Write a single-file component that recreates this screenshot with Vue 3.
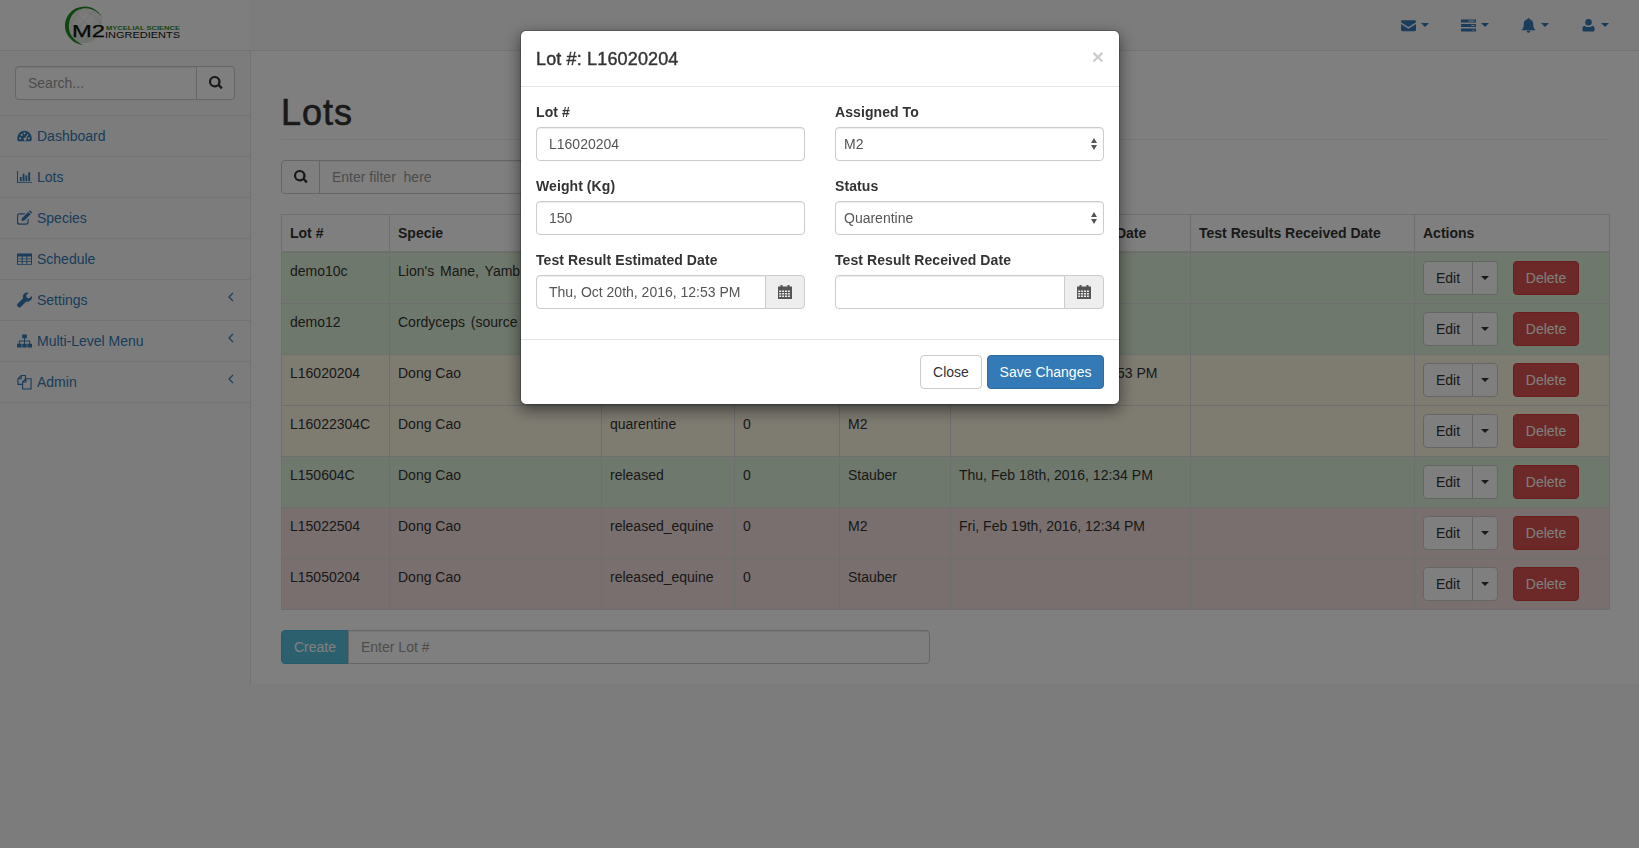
<template>
  <div class="page">
    <header class="navbar">
      <div class="brand">
        <svg class="logo" width="130" height="50" viewBox="0 0 130 50">
          <defs>
            <radialGradient id="dome" cx="0.55" cy="0.3" r="0.7">
              <stop offset="0" stop-color="#fafafa" />
              <stop offset="1" stop-color="#dde3da" />
            </radialGradient>
          </defs>
          <circle cx="24" cy="25" r="18" fill="url(#dome)" />
          <path d="M14 12 38 34M24 8 42 24M8 22 28 42M34 10 12 36M42 20 24 42M22 8 6 28" fill="none" stroke="#c8cfc6" stroke-width="0.5" />
          <path d="M43 19C38 8 27 4 17 8 7 12 2 24 7 34c3 6 9 10 16 11-6-3-11-7-13-12C7 24 10 14 18 10c9-4 19-1 25 9z" fill="#1f8a1f" />
          <text x="12" y="37" class="logo-m2" textLength="33" lengthAdjust="spacingAndGlyphs">M2</text>
          <text x="46" y="29.6" class="logo-sci" textLength="74" lengthAdjust="spacingAndGlyphs">MYCELIAL SCIENCE</text>
          <text x="45" y="37.8" class="logo-ing" textLength="75" lengthAdjust="spacingAndGlyphs">INGREDIENTS</text>
        </svg>
      </div>
      <nav class="top-links">
        <a v-for="n in topIcons" :key="n" class="top-item">
          <svg class="ico" width="15" height="15" viewBox="0 0 16 16"><path :d="icons[n]" fill-rule="evenodd" /></svg>
          <span class="caret"></span>
        </a>
      </nav>
    </header>

    <div class="main">
      <aside class="sidebar">
        <div class="side-search">
          <div class="input-group">
            <input class="form-control" placeholder="Search..." />
            <button class="btn addon-btn">
              <svg width="14" height="14" viewBox="0 0 16 16"><path :d="icons.search" fill-rule="evenodd" /></svg>
            </button>
          </div>
        </div>
        <a v-for="m in menu" :key="m.label" class="side-link">
          <svg v-if="m.line" class="side-ico line" width="16" height="16" viewBox="0 0 16 16"><path :d="icons[m.icon]" /></svg>
          <svg v-else class="side-ico" width="16" height="16" viewBox="0 0 16 16"><path :d="icons[m.icon]" fill-rule="evenodd" /></svg>
          <span class="side-label">{{ m.label }}</span>
          <svg v-if="m.sub" class="arrow" width="8" height="10" viewBox="0 0 8 10"><path d="M6 1 2 5l4 4" /></svg>
        </a>
      </aside>

      <main class="wrapper">
        <h1 class="page-header">Lots</h1>
        <div class="input-group wide">
          <button class="btn addon-btn">
            <svg width="14" height="14" viewBox="0 0 16 16"><path :d="icons.search" fill-rule="evenodd" /></svg>
          </button>
          <input class="form-control" placeholder="Enter filter  here" />
        </div>

        <table class="lots">
          <colgroup>
            <col v-for="(w, i) in colWidths" :key="i" :style="{ width: w + 'px' }" />
          </colgroup>
          <thead>
            <tr><th v-for="h in headers" :key="h">{{ h }}</th></tr>
          </thead>
          <tbody>
            <tr v-for="r in rows" :key="r.lot" :class="r.tone">
              <td>{{ r.lot }}</td>
              <td :class="{ long: r.long }">{{ r.specie }}</td>
              <td>{{ r.status }}</td>
              <td>{{ r.weight }}</td>
              <td>{{ r.to }}</td>
              <td>{{ r.date }}</td>
              <td></td>
              <td>
                <div class="actions">
                  <button class="btn edit">Edit</button>
                  <button class="btn edit-caret"><span class="caret dark"></span></button>
                  <button class="btn delete">Delete</button>
                </div>
              </td>
            </tr>
          </tbody>
        </table>

        <div class="input-group wide">
          <button class="btn create">Create</button>
          <input class="form-control" placeholder="Enter Lot #" />
        </div>
      </main>
    </div>

    <div class="backdrop"></div>

    <div class="modal-layer">
      <div class="modal">
        <div class="modal-head">
          <h4>Lot #: L16020204</h4>
          <span class="close">×</span>
        </div>
        <div class="modal-body">
          <div class="field">
            <label>Lot #</label>
            <input class="form-control" value="L16020204" />
          </div>
          <div class="field">
            <label>Assigned To</label>
            <div class="select-box">
              <select class="form-control"><option>M2</option></select>
            </div>
          </div>
          <div class="field">
            <label>Weight (Kg)</label>
            <input class="form-control" value="150" />
          </div>
          <div class="field">
            <label>Status</label>
            <div class="select-box">
              <select class="form-control"><option>Quarentine</option></select>
            </div>
          </div>
          <div class="field">
            <label>Test Result Estimated Date</label>
            <div class="input-group">
              <input class="form-control" value="Thu, Oct 20th, 2016, 12:53 PM" />
              <span class="cal"><svg width="16" height="16" viewBox="0 0 16 16"><path :d="calendar" fill-rule="evenodd" /></svg></span>
            </div>
          </div>
          <div class="field">
            <label>Test Result Received Date</label>
            <div class="input-group">
              <input class="form-control" />
              <span class="cal"><svg width="16" height="16" viewBox="0 0 16 16"><path :d="calendar" fill-rule="evenodd" /></svg></span>
            </div>
          </div>
        </div>
        <div class="modal-foot">
          <button class="btn close-btn">Close</button>
          <button class="btn primary">Save Changes</button>
        </div>
      </div>
    </div>
  </div>
</template>

<script setup>
const icons = {
  envelope: 'M1.5 2.5h13A1.5 1.5 0 0 1 16 4v.6L8 9.6 0 4.6V4a1.5 1.5 0 0 1 1.5-1.5z M0 6.4l8 5 8-5v6.1a1.5 1.5 0 0 1-1.5 1.5h-13A1.5 1.5 0 0 1 0 12.5z',
  tasks: 'M0 1.5h16v3.2H0z M8 2.6v1h6.5v-1z M0 6.4h16v3.2H0z M11 7.5v1h3.5v-1z M0 11.3h16v3.2H0z M12 12.4v1h2.5v-1z',
  bell: 'M8 0a1.2 1.2 0 0 0-1.1 1.3C4.6 1.8 3 3.6 3 6c0 4-1.2 5.5-2.5 7h15C14.2 11.5 13 10 13 6c0-2.4-1.6-4.2-3.9-4.7A1.2 1.2 0 0 0 8 0z M6 13.7h4a2 2 0 0 1-4 0z',
  user: 'M8 1a3.5 3.5 0 1 0 0 7 3.5 3.5 0 0 0 0-7z M3.5 8.2C4.5 9 6 9.5 8 9.5s3.5-.5 4.5-1.3c1.5.3 2 2 2 4.3 0 1.2-.8 2-2 2h-9c-1.2 0-2-.8-2-2 0-2.3.5-4 2-4.3z',
  search: 'M6.5 0a6.5 6.5 0 1 0 3.9 11.7l3.4 3.4 1.9-1.9-3.4-3.4A6.5 6.5 0 0 0 6.5 0z M6.5 2.4a4.1 4.1 0 1 1 0 8.2 4.1 4.1 0 0 1 0-8.2z',
  gauge: 'M8 2.5A7.8 7.8 0 0 0 .2 10.3c0 1.3.3 2.4.9 3.4h13.8c.6-1 .9-2.1.9-3.4A7.8 7.8 0 0 0 8 2.5z M2.2 10.5a1.2 1.2 0 1 0 2.4 0 1.2 1.2 0 0 0-2.4 0z M3.8 6.7a1.2 1.2 0 1 0 2.4 0 1.2 1.2 0 0 0-2.4 0z M6.8 5.1a1.2 1.2 0 1 0 2.4 0 1.2 1.2 0 0 0-2.4 0z M11.4 5.5 8.9 9.7a1.6 1.6 0 1 0 1 .6l2.5-4.2z M11.4 10.5a1.2 1.2 0 1 0 2.4 0 1.2 1.2 0 0 0-2.4 0z',
  bars: 'M0 1.5h1V13.5h15v1H0z M3 8h2v4.5H3z M6 4.5h2v8H6z M9 6.5h2v6H9z M12 3h2v9.5h-2z',
  edit: 'M2.5 3H9L7.8 4.2H2.7c-.8 0-1.5.7-1.5 1.5v6.6c0 .8.7 1.5 1.5 1.5h7c.8 0 1.5-.7 1.5-1.5V9.6l1.2-1.2v4.1c0 1.5-1.2 2.7-2.7 2.7H2.5A2.5 2.5 0 0 1 0 12.5v-7A2.5 2.5 0 0 1 2.5 3z M5 8.5l7-7L14.5 4l-7 7H5z M12.7.8l.6-.5c.3-.3.7-.3 1 0l1.4 1.4c.3.3.3.7 0 1l-.5.6z',
  table: 'M0 2h16v12H0z M1 5.2v2.3h4V5.2z M6 5.2v2.3h4V5.2z M11 5.2v2.3h4V5.2z M1 8.3v2.2h4V8.3z M6 8.3v2.2h4V8.3z M11 8.3v2.2h4V8.3z M1 11.2v2h4v-2z M6 11.2v2h4v-2z M11 11.2v2h4v-2z',
  wrench: 'M15.6 3.6l-2.8 2.8-2.3-.9-.9-2.3L12.4.4a4.5 4.5 0 0 0-5.9 5.7L.6 12a1.9 1.9 0 0 0 0 2.7l.7.7a1.9 1.9 0 0 0 2.7 0l5.9-5.9a4.5 4.5 0 0 0 5.7-5.9z',
  sitemap: 'M5.5 1h5v4h-5z M7.5 5h1v2.5h-1z M2 7.5h12v1H2z M2 8.5h1V11H2z M7.5 8.5h1V11h-1z M13 8.5h1V11h-1z M0 11h5v4H0z M5.7 11h4.6v4H5.7z M11 11h5v4h-5z',
  files: 'M5.5 10.5H1V4.5L4.5 1H9v3.5 M4.5 1v3.5H1 M6 8l3.5-3.5H15v11H6z M9.5 4.5V8H6'
}

// calendar has a small grid of holes, easier to build than to write out
let calendar = 'M1 2.5h2.5V1h2v1.5h5V1h2v1.5H15V15H1z'
for (const y of [6.4, 8.9, 11.4]) {
  for (const x of [2.2, 5.1, 8, 10.9]) calendar += ` M${x} ${y}v1.6h2v-1.6z`
}

const topIcons = ['envelope', 'tasks', 'bell', 'user']

const menu = [
  { label: 'Dashboard', icon: 'gauge' },
  { label: 'Lots', icon: 'bars' },
  { label: 'Species', icon: 'edit' },
  { label: 'Schedule', icon: 'table' },
  { label: 'Settings', icon: 'wrench', sub: true },
  { label: 'Multi-Level Menu', icon: 'sitemap', sub: true },
  { label: 'Admin', icon: 'files', sub: true, line: true }
]

const colWidths = [108, 212, 133, 105, 111, 240, 224, 195]
const headers = ['Lot #', 'Specie', 'Status', 'Weight', 'Assigned To', 'Test Results Estimated Date', 'Test Results Received Date', 'Actions']

const rows = [
  { lot: 'demo10c', specie: "Lion's Mane, Yamb", long: true, status: 'released', weight: 0, to: 'M2', date: '', tone: 'ok' },
  { lot: 'demo12', specie: 'Cordyceps (source .', long: true, status: 'released', weight: 0, to: 'M2', date: '', tone: 'ok' },
  { lot: 'L16020204', specie: 'Dong Cao', status: 'quarentine', weight: 150, to: 'M2', date: 'Thu, Sept 20th, 2016, 12:53 PM', tone: 'warn' },
  { lot: 'L16022304C', specie: 'Dong Cao', status: 'quarentine', weight: 0, to: 'M2', date: '', tone: 'warn' },
  { lot: 'L150604C', specie: 'Dong Cao', status: 'released', weight: 0, to: 'Stauber', date: 'Thu, Feb 18th, 2016, 12:34 PM', tone: 'ok' },
  { lot: 'L15022504', specie: 'Dong Cao', status: 'released_equine', weight: 0, to: 'M2', date: 'Fri, Feb 19th, 2016, 12:34 PM', tone: 'bad' },
  { lot: 'L15050204', specie: 'Dong Cao', status: 'released_equine', weight: 0, to: 'Stauber', date: '', tone: 'bad' }
]
</script>

<style>
html, body { margin: 0; background: #f8f8f8; }
</style>

<style scoped>
.page { font: 14px/20px "Liberation Sans", Arial, sans-serif; color: #333; min-height: 848px; background: #f8f8f8; }
* { box-sizing: border-box; }

.navbar { height: 51px; display: flex; justify-content: space-between; border-bottom: 1px solid #e7e7e7; }
.brand { width: 250px; height: 50px; background: #fcfcfc; padding-left: 60px; }
.logo { display: block; }
.logo-m2 { font: 16px "Liberation Sans", sans-serif; fill: #111; stroke: #111; stroke-width: 0.25; }
.logo-sci { font: bold 4.5px "Liberation Sans", sans-serif; fill: #2b8a2b; }
.logo-ing { font: 9.5px "Liberation Sans", sans-serif; fill: #111; }
.top-links { display: flex; margin-right: 13px; color: #337ab7; }
.top-item { width: 60px; display: flex; align-items: center; gap: 5px; padding-left: 15px; }
.ico { fill: currentColor; }
.caret { display: inline-block; width: 0; height: 0; border-top: 4px solid; border-left: 4px solid transparent; border-right: 4px solid transparent; }
.caret.dark { color: #333; }

.main { display: flex; }
.sidebar { width: 250px; flex: none; }
.side-search { padding: 15px; border-bottom: 1px solid #e7e7e7; }
.side-link { height: 41px; display: flex; align-items: center; padding: 0 15px 1px 17px; border-bottom: 1px solid #e7e7e7; color: #337ab7; }
.side-ico { fill: currentColor; margin-right: 5px; flex: none; width: 15px; }
.side-ico.line { fill: none; stroke: currentColor; stroke-width: 1.2; }
.side-label { flex: 1; }
.arrow { fill: none; stroke: currentColor; stroke-width: 1.2; margin-top: -6px; }

.wrapper { flex: 1; min-width: 0; background: #fff; border-left: 1px solid #e7e7e7; padding: 0 30px 20px; }
.page-header { margin: 40px 0 20px; padding: 2px 0 7px; border-bottom: 1px solid #eee; font-size: 36px; line-height: 39px; font-weight: 400; letter-spacing: 1px; -webkit-text-stroke: 0.6px; color: #333; }

.input-group { display: flex; }
.input-group.wide { width: 649px; }
.form-control { display: block; width: 100%; height: 34px; min-width: 0; padding: 6px 12px; font: inherit; color: #555; background: #fff; border: 1px solid #ccc; border-radius: 4px; box-shadow: inset 0 1px 1px rgba(0, 0, 0, .075); outline: none; }
.form-control::placeholder { color: #999; opacity: 1; }
.btn { height: 34px; padding: 6px 12px; font: inherit; color: #333; background: #fff; border: 1px solid #ccc; border-radius: 4px; white-space: nowrap; }
.addon-btn { flex: none; width: 39px; padding: 0; display: flex; align-items: center; justify-content: center; fill: #333; }
.sidebar .form-control { border-radius: 4px 0 0 4px; }
.sidebar .addon-btn { margin-left: -1px; border-radius: 0 4px 4px 0; }
.wrapper .addon-btn { border-radius: 4px 0 0 4px; }
.wrapper .addon-btn + .form-control, .create + .form-control { margin-left: -1px; border-radius: 0 4px 4px 0; }
.create { flex: none; width: 68px; padding: 0; color: #fff; background: #5bc0de; border-color: #46b8da; border-radius: 4px 0 0 4px; }

.lots { width: 100%; margin: 20px 0; border-collapse: collapse; table-layout: fixed; }
.lots th, .lots td { padding: 8px; border: 1px solid #ddd; text-align: left; vertical-align: top; white-space: nowrap; overflow: hidden; }
.lots th { border-bottom-width: 2px; }
.lots td.long { word-spacing: 2px; }
.ok td { background: #dff0d8; }
.warn td { background: #fcf8e3; }
.bad td { background: #f2dede; }
.actions { display: flex; }
.edit { width: 50px; padding: 0; border-radius: 4px 0 0 4px; }
.edit-caret { width: 26px; margin-left: -1px; padding: 0; display: flex; align-items: center; justify-content: center; border-radius: 0 4px 4px 0; }
.delete { width: 66px; padding: 0; margin-left: 15px; color: #fff; background: #d9534f; border-color: #d43f3a; }

.backdrop { position: fixed; inset: 0; background: rgba(0, 0, 0, .5); }
.modal-layer { position: fixed; inset: 0; }
.modal { width: 600px; margin: 30px 0 0 520px; background: #fff; border: 1px solid rgba(0, 0, 0, .2); border-radius: 6px; background-clip: padding-box; box-shadow: 0 5px 15px rgba(0, 0, 0, .5); }
.modal-head { display: flex; justify-content: space-between; padding: 15px; border-bottom: 1px solid #e5e5e5; }
.modal-head h4 { margin: 1px 0 -1px; font-size: 18px; line-height: 25px; font-weight: 400; letter-spacing: .15px; -webkit-text-stroke: 0.4px; }
.close { font-size: 21px; line-height: 21px; font-weight: 700; color: #000; opacity: .2; }
.modal-body { display: grid; grid-template-columns: 269px 269px; column-gap: 30px; padding: 15px 15px 15px; }
.field { margin-bottom: 15px; }
.field label { display: block; margin-bottom: 5px; font-weight: 700; letter-spacing: .08px; }
.select-box { position: relative; }
.select-box select { appearance: none; padding-left: 8px; }
.select-box::before, .select-box::after { content: ""; position: absolute; right: 7px; border-left: 3.5px solid transparent; border-right: 3.5px solid transparent; pointer-events: none; }
.select-box::before { top: 11px; border-bottom: 5px solid #555; }
.select-box::after { top: 18px; border-top: 5px solid #555; }
.field .input-group .form-control { border-radius: 4px 0 0 4px; }
.cal { flex: none; width: 40px; margin-left: -1px; display: flex; align-items: center; justify-content: center; background: #eee; border: 1px solid #ccc; border-radius: 0 4px 4px 0; fill: #555; }
.modal-foot { display: flex; justify-content: flex-end; gap: 5px; padding: 15px; border-top: 1px solid #e5e5e5; }
.close-btn { width: 62px; padding: 0; }
.primary { width: 117px; padding: 0; color: #fff; background: #337ab7; border-color: #2e6da4; }
</style>
